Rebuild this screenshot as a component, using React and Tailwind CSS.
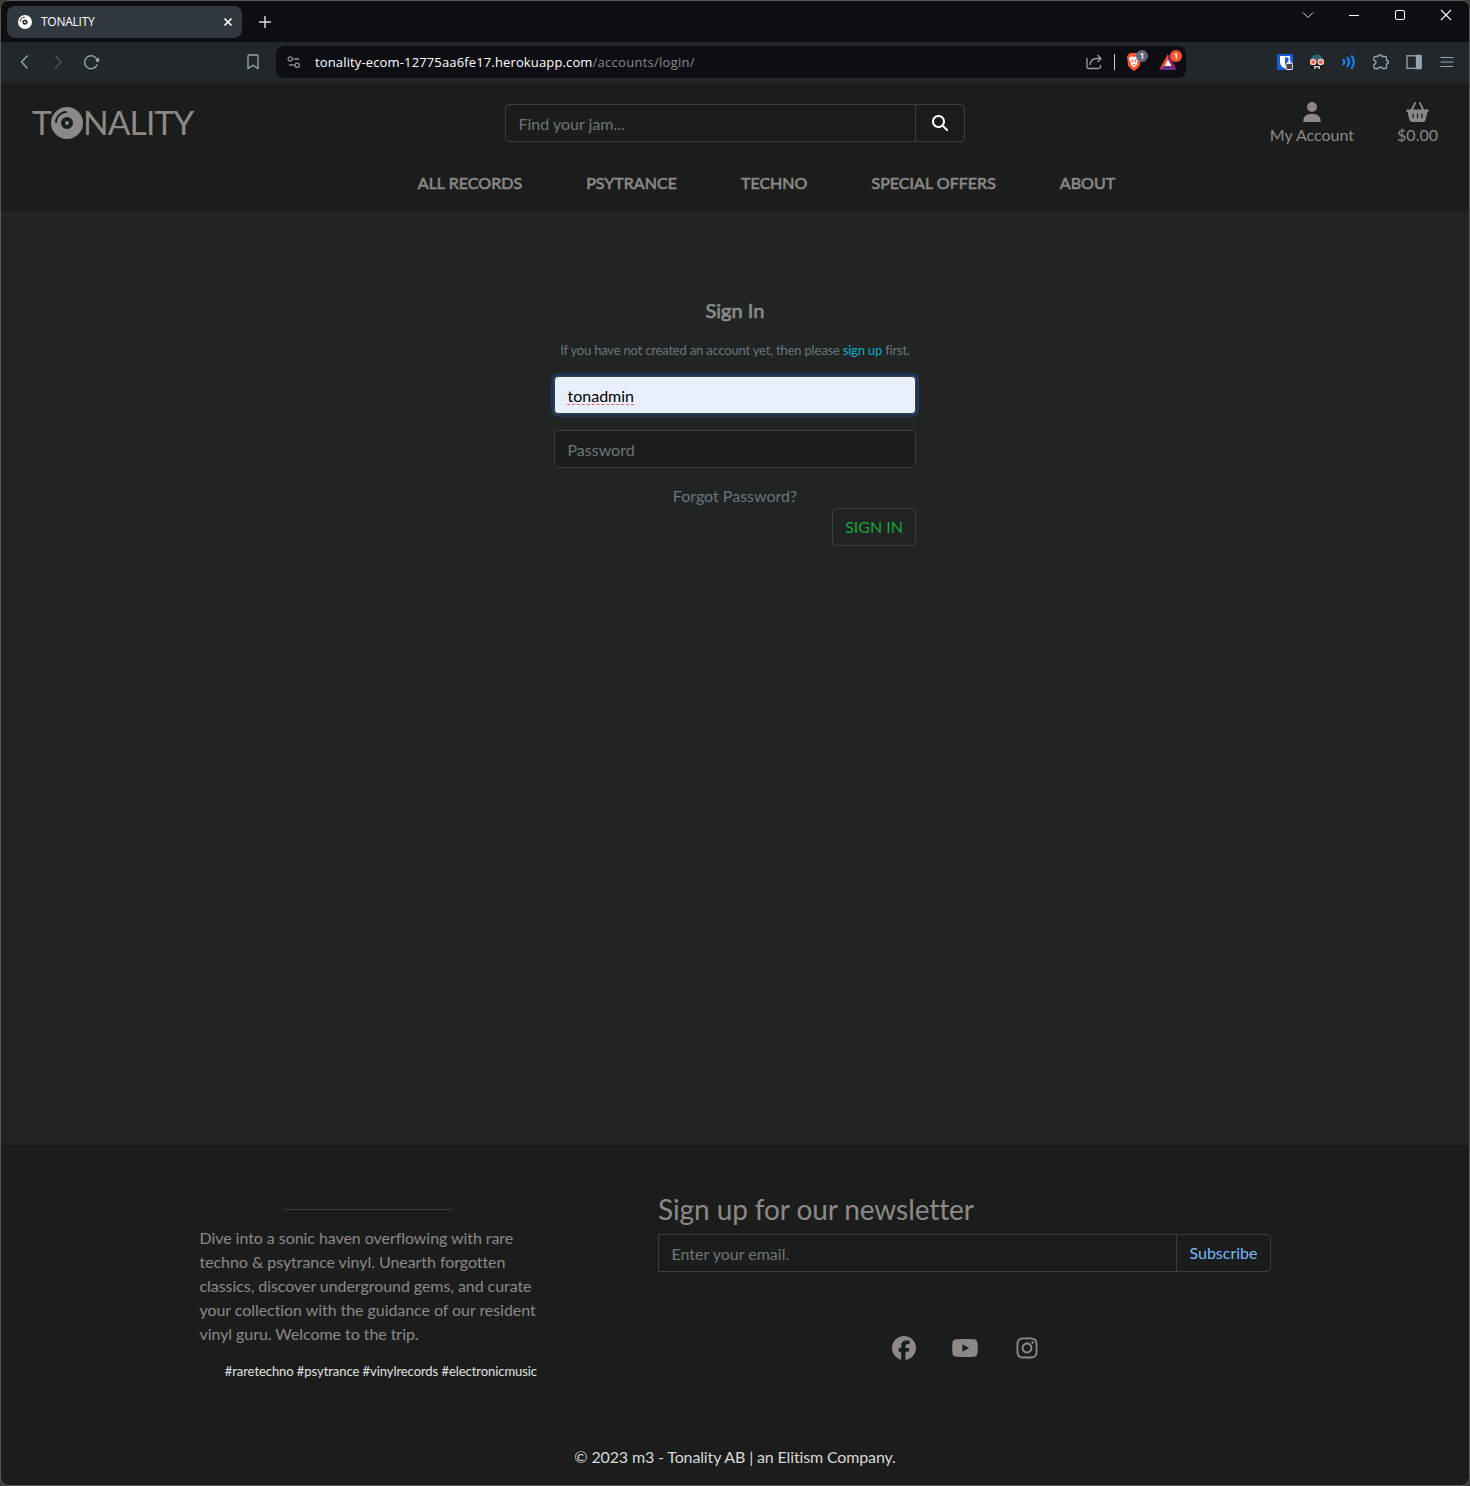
import React from "react";
import { FaUser, FaBasketShopping, FaMagnifyingGlass, FaFacebook, FaYoutube, FaInstagram, FaCompactDisc } from "react-icons/fa6";

const nav = ["ALL RECORDS", "PSYTRANCE", "TECHNO", "SPECIAL OFFERS", "ABOUT"];

function Chrome() {
  return (
    <div className="font-['Open_Sans',sans-serif]">
      <div className="flex h-[41px] items-start justify-between bg-[#0d0e13]">
        <div className="flex items-center pt-[5px] pl-[6px]">
          <div className="flex h-8 w-[235px] items-center rounded-lg bg-[#32393e] pr-[9px] pl-[11px] text-white">
            <FaCompactDisc className="size-[14px]" />
            <span className="ml-[9px] flex-1 text-[12px] tracking-[-0.25px]">TONALITY</span>
            <svg width="10" height="10" viewBox="0 0 10 10" stroke="#fff" strokeWidth="1.7"><path d="M1.5 1.5l7 7M8.500 1.500l-7 7" /></svg>
          </div>
          <svg className="ml-[17px]" width="12" height="12" viewBox="0 0 12 12" stroke="#d8dadb" strokeWidth="1.5"><path d="M6 0v12M0 6h12" /></svg>
        </div>
        <div className="flex items-center gap-[34px] pt-[8px] pr-[17px]">
          <svg width="12" height="12" viewBox="0 0 12 12" fill="none" stroke="#e0e1e2"><path d="M1 3.500l5 5 5-5" /></svg>
          <svg width="12" height="12" viewBox="0 0 12 12" stroke="#fff"><path d="M1 6.500h10" /></svg>
          <svg width="12" height="12" viewBox="0 0 12 12" fill="none" stroke="#fff"><rect x="1.500" y="1.500" width="9" height="9" rx="1.500" /></svg>
          <svg width="12" height="12" viewBox="0 0 12 12" stroke="#fff" strokeWidth="1.100"><path d="M1 1l10 10M11 1L1 11" /></svg>
        </div>
      </div>
      <div className="flex h-[41px] items-center bg-[#22272b] pb-[2px]">
        <div className="flex items-center pl-[16px] text-[#98a5ac]">
          <svg width="14" height="16" viewBox="0 0 14 16" fill="none" stroke="currentColor" strokeWidth="1.400"><path d="M10.500 1.500L4.500 8l6 6.500" /></svg>
          <svg className="ml-[20px]" width="14" height="16" viewBox="0 0 14 16" fill="none" stroke="#4d5459" strokeWidth="1.400"><path d="M4 1.500L10 8l-6 6.500" /></svg>
          <svg className="ml-[18px]" width="17" height="16" viewBox="0 0 17 16" fill="none" stroke="currentColor" strokeWidth="1.400"><path d="M14.200 10.500a6.500 6.500 0 1 1-.2-5" /><circle cx="14.600" cy="6" r="1.900" fill="currentColor" stroke="none" /></svg>
          <svg className="ml-[147px]" width="12" height="16" viewBox="0 0 12 16" fill="none" stroke="currentColor" strokeWidth="1.300"><path d="M1 2.200Q1 1 2.200 1h7.600Q11 1 11 2.200V14.500L6 11.200 1 14.500z" /></svg>
        </div>
        <div className="ml-[17px] flex h-8 w-[910px] items-center rounded-lg bg-[#0d0e13] pl-[11px]">
          <svg width="14" height="14" viewBox="0 0 14 14" fill="none" stroke="#8b9094" strokeWidth="1.300"><circle cx="3.200" cy="4" r="2.100" /><path d="M6.500 4H12M2 10h5.500" /><circle cx="10.200" cy="10.200" r="2.100" /></svg>
          <span className="ml-[14px] w-[765px] pt-[2px] text-[13px] whitespace-nowrap text-[#878a8d]"><span className="tracking-[0.14px] text-white">tonality-ecom-12775aa6fe17.herokuapp.com</span><span className="tracking-[0.27px]">/accounts/login/</span></span>
          <svg className="ml-[6px]" width="16" height="16" viewBox="0 0 16 16" fill="none" stroke="#9ba2a6" strokeWidth="1.300"><path d="M1 4v8.500Q1 14.500 3 14.500h9.500Q14.500 14.500 14.500 13V11M4 11Q4.500 4.500 11 4.500h4M11.500 1L15 4.500 11.500 8" /></svg>
          <span className="ml-3 h-4 w-px bg-[#c9cccd]" />
          <div className="relative ml-[11px] h-[18px] w-[16px]">
            <svg width="16" height="18" viewBox="0 0 16 18"><path d="M4 0h8l3 3-1 9q-.5 2-6 6Q2.500 14 2 12L1 3z" fill="#fb542b" /><path d="M3.500 4L6 3.500l2 .6 2-.6 2.500.5.5 2.500-2 3 .3 2L8 14.500l-3.300-3 .3-2-2-3z" fill="#fff" /><path d="M5 6.500l2 .7-.5 2.300M11 6.500l-2 .7.500 2.300M6.500 11.800h3" stroke="#fb542b" fill="none" /></svg>
            <span className="absolute -top-[3px] left-[10px] flex size-[12px] items-center justify-center rounded-full bg-[#636775] text-[9px] leading-none font-semibold text-white">1</span>
          </div>
          <div className="relative ml-[17px] h-[16px] w-[18px]">
            <svg width="18" height="16" viewBox="0 0 18 16"><path d="M9 0L0 16l9-5.500z" fill="#ff4724" /><path d="M9 0l9 16-9-5.500z" fill="#9e1f63" /><path d="M0 16h18l-9-6z" fill="#662d91" /><path d="M9 5.500L5.500 12h7z" fill="#fff" /></svg>
            <span className="absolute -top-[4px] left-[11px] flex size-[12px] items-center justify-center rounded-full bg-[#fb542b] text-[9px] leading-none font-semibold text-white">1</span>
          </div>
        </div>
        <div className="ml-[91px] flex items-center gap-4 text-[#98a5ac]">
          <svg width="16" height="16" viewBox="0 0 16 16"><rect width="16" height="16" rx="1" fill="#175ddc" /><path d="M3 2h10v6q0 4-5 6.500Q3 12 3 8z" fill="#fff" /><path d="M8 3.500h3.500V8q0 2.500-3.500 4.500z" fill="#175ddc" /><rect x="9" y="9.500" width="6.700" height="6" rx="1" fill="#444" stroke="#eee" strokeWidth="1" /><path d="M10.700 9.500V8.500q0-1.500 1.800-1.500t1.800 1.500v1" fill="none" stroke="#eee" /></svg>
          <svg width="16" height="16" viewBox="0 0 16 16"><path d="M1.500 7.500Q2 .5 8 .5t6.500 7z" fill="#2c6470" /><path d="M1.500 9h13v5l-2 1h-9l-2-1z" fill="#15191b" /><path d="M5 12h6v3H9.500v-1.500h-3V15H5z" fill="#d5c9c2" /><circle cx="4.200" cy="8" r="2.700" fill="#e66b58" stroke="#f0d5cb" strokeWidth="1.200" /><circle cx="11.800" cy="8" r="2.700" fill="#e66b58" stroke="#f0d5cb" strokeWidth="1.200" /></svg>
          <svg width="16" height="16" viewBox="0 0 16 16" fill="none" stroke="#1389f5" strokeWidth="2.100" strokeLinecap="round"><path d="M2.500 5.800q1.600 2.200 0 4.400M6.500 3.800q3 4.200 0 8.400M10.800 2q4 6 0 12" /></svg>
          <svg width="16" height="16" viewBox="0 0 16 16" fill="none" stroke="currentColor" strokeWidth="1.300"><path d="M1 3.500Q1 2.500 2 2.500h3Q5 .8 7 .8t2 1.700h3.500q1 0 1 1V6.500q2 .2 2 1.800t-2 1.800v3.400q0 1-1 1H9.500q-.3-1.500-2-1.500t-2 1.500H2q-1 0-1-1v-3Q3 10.200 3 8.300T1 6.300z" /></svg>
          <svg className="ml-[1px]" width="16" height="16" viewBox="0 0 16 16" fill="none" stroke="currentColor" strokeWidth="1.300"><rect x="1" y="1.800" width="14" height="12.500" /><path d="M10.500 1.500H15V14.500h-4.500z" fill="currentColor" /></svg>
          <svg className="ml-[1px]" width="16" height="16" viewBox="0 0 16 16" stroke="currentColor" strokeWidth="1.200"><path d="M1.500 3.500h13M1.500 8h13M1.500 12.500h13" /></svg>
        </div>
      </div>
    </div>
  );
}

export default function App() {
  return (
    <div className="h-[1486px] w-[1470px] overflow-hidden bg-[#3a403b]">
      <div className="flex h-full flex-col overflow-hidden rounded-lg border border-[#555a56] bg-[#1b1d1c] font-['Lato',sans-serif] text-base text-[#8c8987]">
        <Chrome />
        <header className="h-[128px] shrink-0 bg-[#1b1d1c]">
          <div className="flex h-[69px] justify-between">
            <div className="flex w-[200px] items-center pt-[11px] pl-[31px] text-[33.5px] leading-none tracking-[-0.85px]">
              <span className="w-[19px] pb-[1px]">T</span><FaCompactDisc className="size-[32px] shrink-0" /><span className="pb-[1px]">NALITY</span>
            </div>
            <div className="mt-[21px] flex h-[38px] w-[460px] rounded border border-[#3c3f3e]">
              <div className="flex-1 pt-[7px] pl-[12.5px] text-[#6c757d]">Find your jam...</div>
              <div className="flex w-[49px] items-center justify-center border-l border-[#3c3f3e] text-white"><FaMagnifyingGlass className="size-4" /></div>
            </div>
            <div className="flex w-[200px] justify-end gap-[43px] pt-[18px] pr-[31px] whitespace-nowrap">
              <div className="flex flex-col items-center"><FaUser className="mt-[1px] mb-[1px] size-[20px]" /><span>My Account</span></div>
              <div className="flex flex-col items-center"><FaBasketShopping className="mt-[1px] mb-[1px] h-[20px] w-[23px]" /><span>$0.00</span></div>
            </div>
          </div>
          <nav className="mt-[19px] ml-[63px] flex justify-center gap-16 leading-6 tracking-[0.03px] [-webkit-text-stroke:0.6px_#8c8987]">
            {nav.map((n) => <span key={n}>{n}</span>)}
          </nav>
        </header>
        <main className="flex h-[934px] shrink-0 flex-col items-center bg-[#202425] pt-[87px]">
          <h1 className="text-[20px] leading-6 [-webkit-text-stroke:0.7px_#8c8987]">Sign In</h1>
          <p className="mt-[18px] text-[13px] leading-5 tracking-[-0.19px] text-[#6c757d]">If you have not created an account yet, then please <a className="text-[#0dacc5]">sign up</a> first.</p>
          <div className="mt-[16px] h-[38px] w-[362px] rounded border border-[#3c3f3e] bg-[#e8f0fe] pt-[7px] pl-[12.5px] text-black shadow-[0_0_0_3px_#203554]"><span className="underline decoration-[#f0625c] decoration-dashed decoration-[1px] underline-offset-[2px]">tonadmin</span></div>
          <div className="mt-4 h-[38px] w-[362px] rounded border border-[#3c3f3e] bg-[#1b1d1c] pt-[7px] pl-[12.5px] text-[#6c757d]">Password</div>
          <a className="mt-4 leading-6 text-[#6c757d]">Forgot Password?</a>
          <div className="flex w-[362px] justify-end"><button className="h-[38px] rounded border border-[#3c3f3e] px-3 text-[#17a53c]">SIGN IN</button></div>
        </main>
        <footer className="flex-1 pt-px">
          <div className="flex">
            <div className="ml-[198px] w-[338px] pt-[63px]">
              <div className="mx-auto h-px w-[168px] bg-[#3c3f3e]" />
              <p className="mt-4 pl-[0.5px] leading-6 tracking-[-0.06px] whitespace-nowrap">Dive into a sonic haven overflowing with rare<br />techno &amp; psytrance vinyl. Unearth forgotten<br />classics, discover underground gems, and curate<br />your collection with the guidance of our resident<br />vinyl guru. Welcome to the trip.</p>
              <p className="mt-[15px] text-right text-[13px] leading-5 tracking-[-0.06px] whitespace-nowrap text-[#e4e2e0]">#raretechno #psytrance #vinylrecords #electronicmusic</p>
            </div>
            <div className="ml-[121px] w-[613px] pt-[46px]">
              <h2 className="text-[28px] leading-[34px] tracking-[-0.1px]">Sign up for our newsletter</h2>
              <div className="mt-[8px] flex h-[38px] rounded-r border border-[#3c3f3e]">
                <div className="flex-1 pt-[7px] pl-[12.5px] text-[#6c757d]">Enter your email.</div>
                <div className="flex w-[94px] items-center justify-center border-l border-[#3c3f3e] text-[#78b9fa]">Subscribe</div>
              </div>
              <div className="mt-[64px] flex items-center justify-center gap-[35.5px] pl-[1px]">
                <FaFacebook className="size-[24px]" /><FaYoutube className="h-[24px] w-[28px]" /><FaInstagram className="size-[24px]" />
              </div>
            </div>
          </div>
          <p className="mt-[64px] text-center leading-6 tracking-[-0.14px] text-[#d9d7d5]">© 2023 m3 - Tonality AB | an Elitism Company.</p>
        </footer>
      </div>
    </div>
  );
}
